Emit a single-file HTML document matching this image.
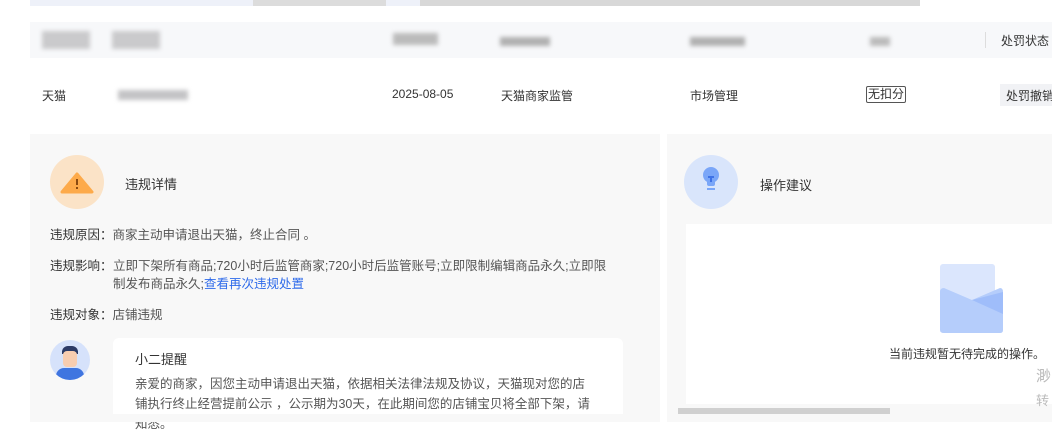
<!DOCTYPE html>
<html><head><meta charset="utf-8"><style>
body{margin:0;width:1052px;height:422px;overflow:hidden;background:#fff;font-family:"Liberation Sans","Noto Sans CJK SC",sans-serif;color:#333;position:relative}
.a{position:absolute;white-space:nowrap}
.blur{position:absolute;background:#ccc;filter:blur(2px)}
</style></head><body>
<div class="a" style="left:30px;top:0;width:890px;height:6px;background:#eef1f9"></div>
<div class="a" style="left:253px;top:0;width:133px;height:6px;background:#dcdcdc"></div>
<div class="a" style="left:420px;top:0;width:500px;height:6px;background:#d8d8d8"></div>
<div class="a" style="left:30px;top:22px;width:1022px;height:36px;background:#f7f8fa"></div>
<div class="blur" style="left:42px;top:31px;width:48px;height:18px;background:#cacacc"></div>
<div class="blur" style="left:112px;top:31px;width:48px;height:18px;background:#cacacc"></div>
<div class="blur" style="left:393px;top:33px;width:45px;height:12px;background:#bbb"></div>
<div class="blur" style="left:500px;top:37px;width:50px;height:9px;background:#b0b0b0"></div>
<div class="blur" style="left:690px;top:37px;width:55px;height:9px;background:#b0b0b0"></div>
<div class="blur" style="left:870px;top:37px;width:20px;height:9px;background:#bbb"></div>
<div class="a" style="left:985px;top:32px;width:1px;height:16px;background:#ddd"></div>
<div class="a" style="left:1001px;top:32px;font-size:12px">处罚状态</div>
<div class="a" style="left:42px;top:87px;font-size:12px">天猫</div>
<div class="blur" style="left:118px;top:90px;width:70px;height:10px;background:#c4c4c6"></div>
<div class="a" style="left:392px;top:87px;font-size:12px">2025-08-05</div>
<div class="a" style="left:501px;top:87px;font-size:12px">天猫商家监管</div>
<div class="a" style="left:690px;top:87px;font-size:12px">市场管理</div>
<div class="a" style="left:866px;top:86px;font-size:12px;border:1px solid #555;border-radius:2px;padding:0 1px;line-height:15px">无扣分</div>
<div class="a" style="left:1000px;top:84px;width:60px;height:22px;background:#f1f2f5"></div>
<div class="a" style="left:1006px;top:87px;font-size:12px">处罚撤销</div>
<div class="a" style="left:30px;top:134px;width:630px;height:288px;background:#f8f8f8"></div>
<div class="a" style="left:667px;top:134px;width:385px;height:288px;background:#f8f8f8"></div>
<div class="a" style="left:50px;top:155px;width:54px;height:54px;border-radius:50%;background:#fbe3c7"></div>
<svg class="a" style="left:60px;top:172px" width="34" height="22"><path d="M17 2 L32 20 H2 Z" fill="#fdaa4a" stroke="#fdaa4a" stroke-linejoin="round" stroke-width="3"/><rect x="16" y="7" width="2" height="6" fill="#8a4a10"/><rect x="16" y="15" width="2" height="2" fill="#8a4a10"/></svg>
<div class="a" style="left:125px;top:174px;font-size:13px">违规详情</div>
<div class="a" style="left:684px;top:155px;width:54px;height:54px;border-radius:50%;background:#d9e5fb"></div>
<svg class="a" style="left:698px;top:165px" width="26" height="30"><circle cx="13" cy="10" r="8" fill="#7aa6f8"/><rect x="9" y="14" width="8" height="7" rx="2" fill="#7aa6f8"/><rect x="9" y="23" width="8" height="2" fill="#7aa6f8"/><path d="M10 12h6M13 12v5" stroke="#3e72e6" stroke-width="2"/></svg>
<div class="a" style="left:760px;top:175px;font-size:13px">操作建议</div>
<div class="a" style="left:686px;top:224px;width:366px;height:180px;background:#fff"></div>
<div class="a" style="left:940px;top:264px;width:55px;height:50px;border-radius:3px;background:#dbe6fd"></div>
<svg class="a" style="left:940px;top:288px" width="64" height="46"><path d="M0 4 Q0 0 4 0 L32 12 L60 0 Q63 0 63 4 V42 Q63 45 60 45 H4 Q0 45 0 42Z" fill="#b5cdfb"/><path d="M32 12 L63 26 V4Z" fill="#9fbdfa"/></svg>
<div class="a" style="left:889px;top:345px;font-size:12px">当前违规暂无待完成的操作。</div>
<div class="a" style="left:1036px;top:365px;font-size:15px;color:#bbb">渺</div>
<div class="a" style="left:1036px;top:390px;font-size:13px;color:#bbb">转</div>
<div class="a" style="left:678px;top:408px;width:212px;height:6px;background:#d0d0d0"></div>
<div class="a" style="left:50px;top:226px;font-size:12.5px;line-height:18px"><span>违规原因：</span><span style="color:#555">商家主动申请退出天猫，终止合同 。</span></div>
<div class="a" style="left:50px;top:257px;font-size:12.5px;line-height:18px">违规影响：</div>
<div class="a" style="left:113px;top:257px;font-size:12.5px;line-height:18px;color:#555;white-space:normal;width:505px">立即下架所有商品;720小时后监管商家;720小时后监管账号;立即限制编辑商品永久;立即限制发布商品永久;<span style="color:#2f6bea">查看再次违规处置</span></div>
<div class="a" style="left:50px;top:306px;font-size:12.5px;line-height:18px"><span>违规对象：</span><span style="color:#555">店铺违规</span></div>
<div class="a" style="left:50px;top:340px;width:40px;height:40px;border-radius:50%;background:#d6e2fb;overflow:hidden"><div style="position:absolute;left:12px;top:6px;width:16px;height:8px;background:#2b3a66;border-radius:6px 6px 0 0"></div><div style="position:absolute;left:13px;top:11px;width:14px;height:16px;background:#f8cdb0;border-radius:4px"></div><div style="position:absolute;left:6px;top:28px;width:28px;height:14px;background:#3f75e0;border-radius:8px 8px 0 0"></div></div>
<div class="a" style="left:113px;top:338px;width:510px;height:84px;background:#fff;border-radius:6px"></div>
<div class="a" style="left:135px;top:349px;font-size:13px">小二提醒</div>
<div class="a" style="left:135px;top:374px;width:462px;font-size:12.5px;line-height:20px;color:#555;white-space:normal">亲爱的商家，因您主动申请退出天猫，依据相关法律法规及协议，天猫现对您的店铺执行终止经营提前公示 ，公示期为30天，在此期间您的店铺宝贝将全部下架，请知悉。</div>
<div class="a" style="left:30px;top:414px;width:630px;height:8px;background:#f8f8f8"></div>
</body></html>
